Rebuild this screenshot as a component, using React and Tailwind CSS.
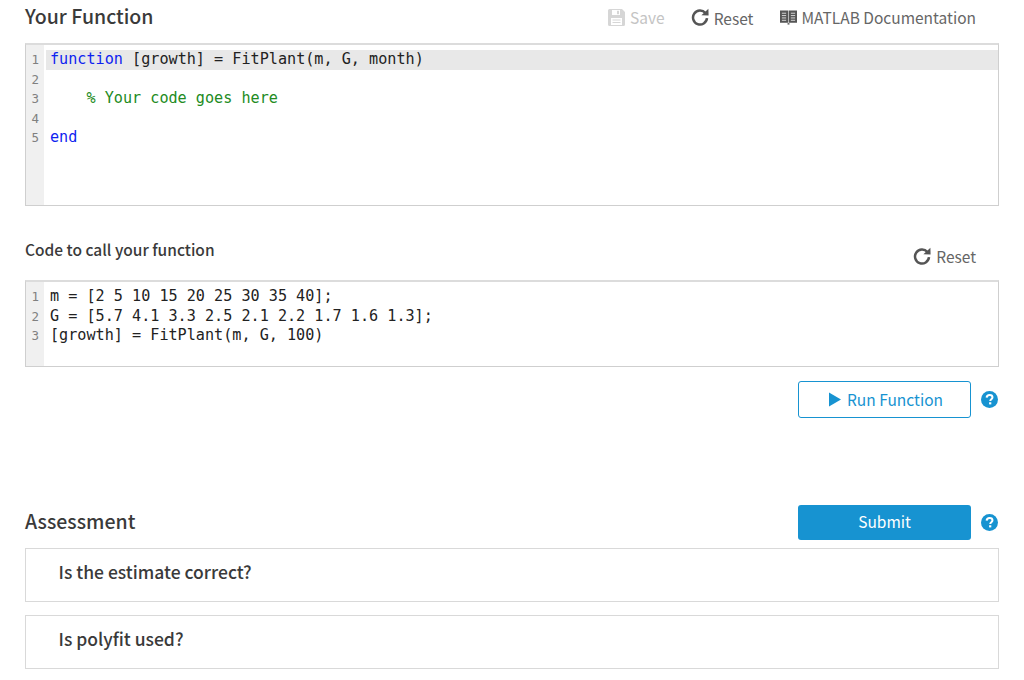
import React from 'react';

const sans = { fontFamily: '"Noto Sans CJK JP", "Noto Sans", sans-serif' };
const mono = { fontFamily: '"DejaVu Sans Mono", monospace' };

const HelpIcon = () => (
    <svg viewBox="0 0 16 16" className="w-[17px] h-[17px]">
        <circle cx="8" cy="8" r="8" fill="#1793d1" />
        <path d="M5.3 6.2C5.4 4.6 6.6 3.7 8.1 3.7C9.7 3.7 10.8 4.6 10.8 5.9C10.8 7.7 8.7 7.7 8.7 9.4" fill="none" stroke="#fff" strokeWidth="1.9" />
        <rect x="7.6" y="10.6" width="2.1" height="2" fill="#fff" />
    </svg>
);

const ResetIcon = () => (
    <svg viewBox="0 0 18 18" className="w-[18px] h-[18px]" fill="none">
        <path d="M14.4 5A7 7 0 1 0 16 10.2" stroke="#555" strokeWidth="2.5" />
        <path d="M10.4 7.2L17.6 7.6L17.4 0.8Z" fill="#555" />
    </svg>
);

const SaveIcon = () => (
    <svg viewBox="0 0 17 17" className="w-[17px] h-[17px]">
        <path d="M0 1.5A1.5 1.5 0 0 1 1.5 0H14L17 3V15.500A1.500 1.500 0 0 1 15.500 17H1.500A1.500 1.500 0 0 1 0 15.500Z" fill="#d6d6d6" />
        <rect x="4" y="1" width="8" height="5" fill="#fff" />
        <rect x="9" y="1.800" width="2" height="3.400" fill="#d6d6d6" />
        <rect x="3" y="9" width="11" height="7" fill="#fff" />
        <path d="M4.500 11h8M4.500 13.500h8" stroke="#d6d6d6" strokeWidth="1" />
    </svg>
);

const DocIcon = () => (
    <svg viewBox="0 0 18 16" className="w-[17px] h-[16px]">
        <path d="M0 1h8.700v13H0zM9.300 1H18v13H9.300z" fill="#555" />
        <path d="M8 14.500h2V16H8z" fill="#555" />
        <path d="M2 4h4.500M2 6.500h4.500M2 9h4.500M2 11.500h4.500M11.500 4H16M11.500 6.500H16M11.500 9H16M11.500 11.500H16" stroke="#ddd" strokeWidth="1" />
    </svg>
);

const Editor = ({ lines, height, activeLine }) => (
    <div className={`${height} flex border border-t-2 border-[#cfcfcf] border-t-[#dcdcdc] bg-white overflow-hidden`}>
        <div className="w-[18px] shrink-0 bg-[#f0f0f0] pt-[5px] text-right pr-[5px] text-[12.5px] leading-[19.5px] text-[#808080]" style={mono}>
            {lines.map((_, i) => <div key={i}>{i + 1}</div>)}
        </div>
        <div className="flex-1 pt-[5px] text-[15.15px] leading-[19.5px] text-[#222] whitespace-pre" style={mono}>
            {lines.map((line, i) => (
                <div key={i} className={`h-[19.5px] ml-[2px] pl-[4px] ${activeLine === i ? 'bg-[#e8e8e8]' : ''}`}>{line}</div>
            ))}
        </div>
    </div>
);

const App = () => {
    const fnLines = [
        <><span className="text-[#0e23f0]">function</span> [growth] = FitPlant(m, G, month)</>,
        '',
        <span className="text-[#228b22]">    % Your code goes here</span>,
        '',
        <span className="text-[#0e23f0]">end</span>,
    ];
    const callLines = [
        'm = [2 5 10 15 20 25 30 35 40];',
        'G = [5.7 4.1 3.3 2.5 2.1 2.2 1.7 1.6 1.3];',
        '[growth] = FitPlant(m, G, 100)',
    ];

    return (
        <div className="w-[1024px] h-[680px] overflow-hidden bg-white px-[25px] text-[#333]" style={sans}>
            <div className="h-[43px] flex items-center justify-between pb-[9px]">
                <h1 className="text-[19.5px] font-medium text-[#3a3a3a] -mt-[2px]">Your Function</h1>
                <div className="flex items-center text-[15.5px] text-[#666] pr-[23px]">
                    <span className="flex items-center gap-[5px] text-[#c4c4c4] mr-[26px]">
                        <SaveIcon />
                        <span className="mt-[1px]">Save</span>
                    </span>
                    <span className="flex items-center gap-[5px] mr-[27px]">
                        <ResetIcon />
                        <span className="mt-[3px]">Reset</span>
                    </span>
                    <span className="flex items-center gap-[4px]">
                        <DocIcon />
                        <span className="mt-[1px]">MATLAB Documentation</span>
                    </span>
                </div>
            </div>
            <Editor lines={fnLines} height="h-[163px]" activeLine={0} />

            <div className="h-[74px] flex items-center justify-between">
                <h2 className="text-[15.5px] font-medium text-[#3a3a3a] mt-[14px]">Code to call your function</h2>
                <span className="flex items-center gap-[5px] text-[15.5px] text-[#666] pr-[23px] mt-[26px]">
                    <ResetIcon />
                    <span className="mt-[2px]">Reset</span>
                </span>
            </div>
            <Editor lines={callLines} height="h-[87px]" />

            <div className="mt-[14px] flex items-center justify-end gap-[10px] pr-[1px]">
                <button className="w-[173px] h-[37px] pl-[3px] flex items-center justify-center gap-[6px] border border-[#1793d1] rounded-[3px] text-[15.5px] text-[#1793d1]">
                    <svg viewBox="0 0 13 15" className="w-[12px] h-[15px]"><path d="M0 0L13 7.500L0 15Z" fill="#1793d1" /></svg>
                    <span>Run Function</span>
                </button>
                <HelpIcon />
            </div>

            <div className="mt-[87px] h-[35px] flex items-center justify-between pr-[1px]">
                <h2 className="text-[19.5px] font-medium text-[#3a3a3a] -mt-[3px]">Assessment</h2>
                <div className="flex items-center gap-[10px]">
                    <button className="w-[173px] h-[35px] pb-[1px] bg-[#1793d1] rounded-[3px] text-[15.5px] text-white">Submit</button>
                    <HelpIcon />
                </div>
            </div>

            <div className="mt-[8px] flex flex-col gap-[13px]">
                {['Is the estimate correct?', 'Is polyfit used?'].map((q) => (
                    <div key={q} className="h-[54px] flex items-center pl-[32.5px] pb-[5px] border border-[#d9d9d9] text-[17.5px] font-medium text-[#3a3a3a]">{q}</div>
                ))}
            </div>
        </div>
    );
};

export default App;
